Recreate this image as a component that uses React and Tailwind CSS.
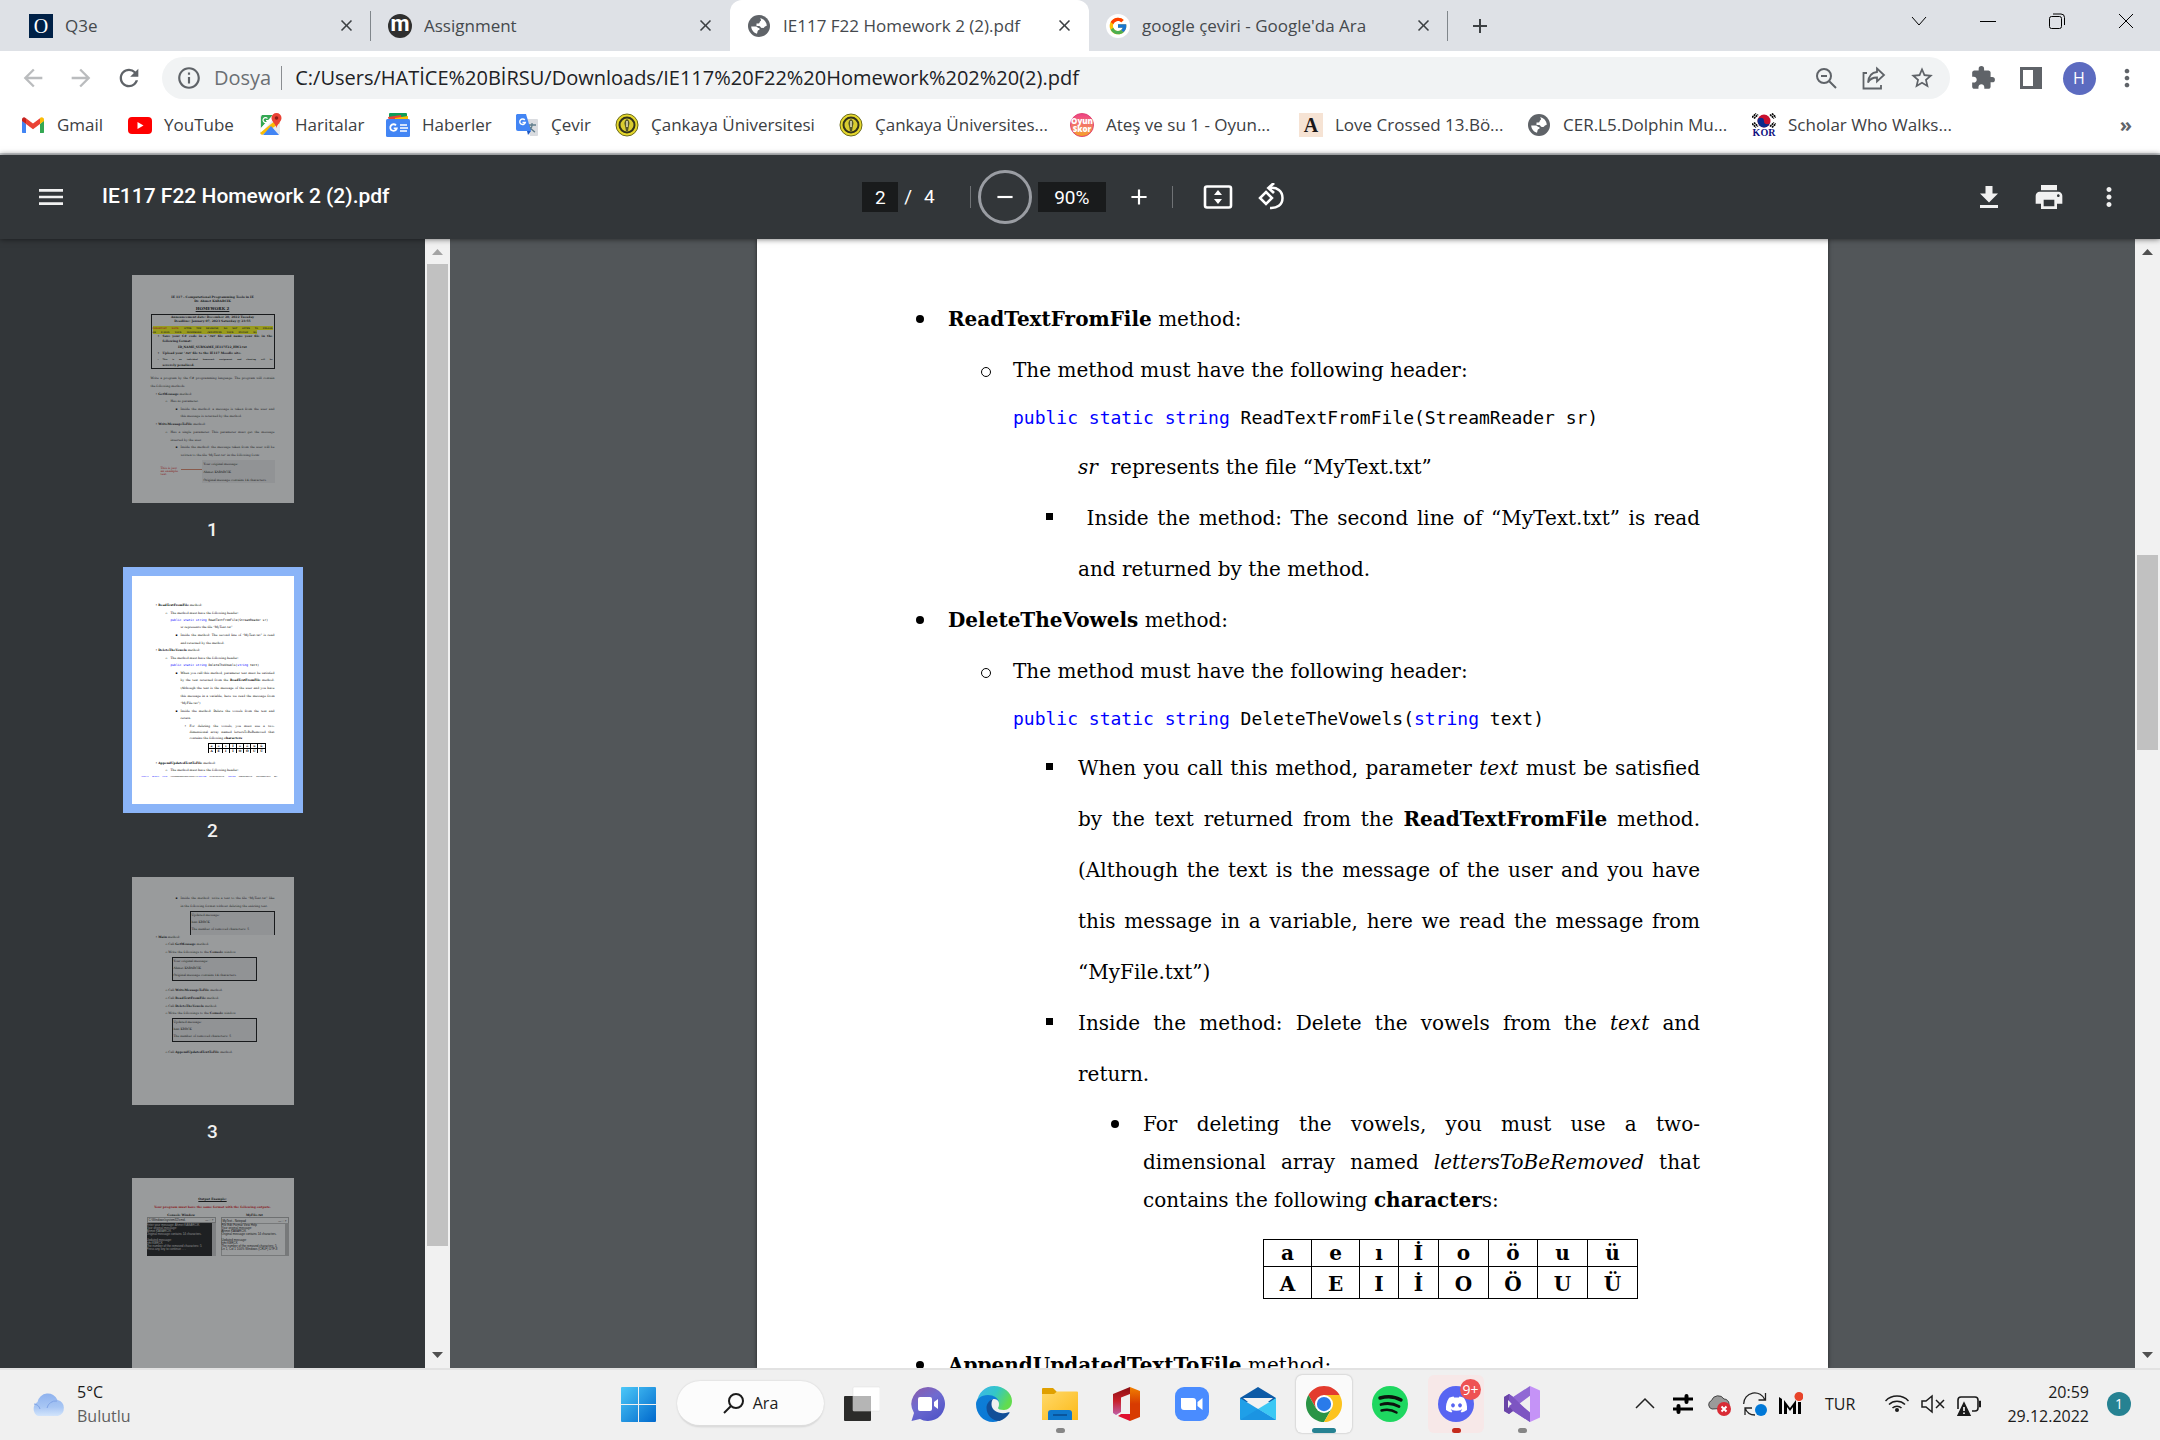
import React from "react";
import {
  MdArrowBack, MdArrowForward, MdRefresh, MdInfoOutline, MdStarBorder, MdExtension, MdMoreVert,
  MdMenu, MdRemove, MdAdd, MdPrint, MdClose,
} from "react-icons/md";
import { FcGoogle } from "react-icons/fc";
import { FaDiscord } from "react-icons/fa";

/* ---------- small drawings ---------- */

const Globe = () => (
  <svg viewBox="0 0 24 24" className="size-6" aria-hidden="true">
    <circle cx="12" cy="12" r="11" fill="#5f6368" />
    <path d="M13 4.200c3.500.4 6.500 3.500 6.800 7.300-.8 1-1.800.5-2.300 1.500s-1.500 1-2.500 1c-1.500 0-1.500-2-3-2H9.500V9.500h2c1.300 0 1-2 2-2.500 1.200-.5.200-2-.5-2.800z" fill="#fff" />
    <path d="M4.200 12.500H9c1.200 0 1.500 1.500 2.700 1.500s1.300 2 0 2-1.200 3-1.700 3.700c-3.300-.8-5.600-3.700-5.800-7.200z" fill="#fff" />
  </svg>
);
const Oxford = () => (
  <span className="flex size-6 items-center justify-center bg-[#002147] font-['Liberation_Serif',serif] text-xl leading-none text-white">O</span>
);
const Moodle = () => (
  <span className="flex size-6 items-center justify-center rounded-full bg-[#2f2f2f] pb-1 font-['Roboto',sans-serif] text-[22px] leading-none font-bold text-white">m</span>
);
const Google = () => (
  <span className="flex size-6 items-center justify-center rounded-full bg-white"><FcGoogle className="size-5" /></span>
);
const Gmail = () => (
  <svg viewBox="0 0 24 24" className="size-6" aria-hidden="true">
    <path d="M1.500 20h3.500V11L1 7.500V19.500z" fill="#4285f4" />
    <path d="M19 20h3.500l.5-.5V7.500L19 11z" fill="#34a853" />
    <path d="M19 5.500V11l4-3V6.500c0-2-2.200-3-3.800-1.800z" fill="#fbbc04" />
    <path d="M5 11V5.200L12 10.500l7-5.300V11l-7 5.300z" fill="#ea4335" />
    <path d="M1 6.500V8l4 3V5.500l-.4-.6C3 3.500 1 4.600 1 6.500z" fill="#c5221f" />
  </svg>
);
const YouTube = () => (
  <svg viewBox="0 0 24 24" className="size-6" aria-hidden="true">
    <rect y="4" width="24" height="17" rx="4" fill="#f00" />
    <path d="M9.500 9v7l6-3.500z" fill="#fff" />
  </svg>
);
const Maps = () => (
  <svg viewBox="0 0 24 24" className="size-6" aria-hidden="true">
    <rect x="1" y="2" width="20" height="20" rx="2" fill="#e8eaed" />
    <path d="M3 2h11L2 15V4z" fill="#34a853" />
    <path d="M14 2h4l-16 18-1-4z" fill="#fff" />
    <path d="M17 7l4 3-18 12-2-2z" fill="#fbbc04" />
    <path d="M12 13l8 9H4z" fill="#4285f4" />
    <path d="M17.500 0a5 5 0 0 0-5 5c0 4 4 5 5 10 1-5 5-6 5-10a5 5 0 0 0-5-5z" fill="#ea4335" />
    <circle cx="17.500" cy="5" r="1.800" fill="#8c1d18" />
    <path d="M8.500 5.500a2.500 2.500 0 1 0 .5 2H7" fill="none" stroke="#fff" strokeWidth="1.200" />
  </svg>
);
const News = () => (
  <svg viewBox="0 0 24 24" className="size-6" aria-hidden="true">
    <rect x="3" y="0" width="18" height="10" rx="1" fill="#0f9d58" />
    <path d="M2 4l13-2 1 6H3z" fill="#ea4335" />
    <path d="M9 5l13-2v7H9z" fill="#fbbc04" />
    <rect y="6" width="24" height="18" rx="1.500" fill="#4285f4" />
    <path d="M10 12.300a3.300 3.300 0 1 0 .8 3H7.700" fill="none" stroke="#fff" strokeWidth="1.800" />
    <path d="M14 12h7M14 15h8M14 18h7" stroke="#fff" strokeWidth="1.600" />
  </svg>
);
const Translate = () => (
  <svg viewBox="0 0 24 24" className="size-6" aria-hidden="true">
    <path d="M10 6h12a1 1 0 0 1 1 1v15a1 1 0 0 1-1 1h-7z" fill="#dadce0" />
    <path d="M13 12h8M17 10v2c0 3-2 5-4 6M14 13c1 3 3 4 6 6" fill="none" stroke="#607d8b" strokeWidth="1.300" />
    <path d="M2 1h9l5 17H3a2 2 0 0 1-2-2V2z" fill="#4285f4" />
    <path d="M12 18h4l-3 4z" fill="#1a56c4" />
    <path d="M9.800 7a2.800 2.800 0 1 0 .5 2.500H7.500" fill="none" stroke="#fff" strokeWidth="1.400" />
  </svg>
);
const Cankaya = () => (
  <svg viewBox="0 0 24 24" className="size-6" aria-hidden="true">
    <circle cx="12" cy="12" r="11" fill="#e6d82c" stroke="#6b6a1c" strokeWidth="1" />
    <circle cx="12" cy="12" r="7.500" fill="#d9cc30" stroke="#33331a" strokeWidth="2" />
    <path d="M12 6c2.500 1.500 3 4 2 6.500L13 18h-2l-1-5c-1.200-3-.5-5.500 2-7z" fill="#55552a" />
    <path d="M12 8v6" stroke="#e8e6c0" strokeWidth="1.500" />
  </svg>
);
const OyunSkor = () => (
  <span className="flex size-6 flex-col items-center justify-center rounded-full border border-[#e0457c] bg-[#f08a1d] bg-linear-to-b from-[#ee3f86] to-[#f5a21b] font-['Open_Sans',sans-serif] text-[8px] leading-[8px] font-extrabold text-white">
    <span>Oyun</span><span>Skor</span>
  </span>
);
const LoveA = () => (
  <span className="flex size-6 items-center justify-center bg-[#f6e3d4] font-['Liberation_Serif',serif] text-xl leading-none font-bold text-[#1c1718]">A</span>
);
const Kor = () => (
  <span className="flex size-6 flex-col items-center">
    <svg viewBox="0 0 24 15" className="h-4 w-6" aria-hidden="true">
      <circle cx="12" cy="7.500" r="6.500" fill="#c8102e" />
      <path d="M5.500 7.500a3.200 3.200 0 0 1 6.500 0 3.200 3.200 0 0 0 6.500 0 6.500 6.500 0 0 1-13 0z" fill="#0b2b8c" />
      <path d="M0 4l4-4M2 5l4-4M20 0l4 4M18 1l4 4M0 10l4 4M2 9l4 4M20 14l4-4M18 13l4-4" stroke="#000" strokeWidth="1.600" strokeDasharray="2 .5" />
    </svg>
    <span className="font-['Liberation_Serif',serif] text-[10px] leading-[8px] font-bold text-[#101080]">KOR</span>
  </span>
);

/* ---------- browser chrome ---------- */

const tabs = [
  { icon: <Oxford />, title: "Q3e", line: true },
  { icon: <Moodle />, title: "Assignment" },
  { icon: <Globe />, title: "IE117 F22 Homework 2 (2).pdf", active: true },
  { icon: <Google />, title: "google çeviri - Google'da Ara", line: true },
];

function TabStrip() {
  return (
    <div className="flex h-[51px] shrink-0 bg-[#dee1e6] pl-3 text-[17px] text-[#45494d]">
      <div role="tablist" className="flex">
        {tabs.map((t) => (
          <div
            key={t.title}
            className={
              t.active
                ? "flex w-[359px] items-center rounded-t-xl bg-white pr-[13px] pl-[17px]"
                : "flex w-[359px] items-center pr-[13px] pl-[17px]"
            }
          >
            {t.icon}
            <button role="tab" aria-selected={!!t.active} className="ml-3 flex-1 truncate text-left">{t.title}</button>
            <button aria-label={"Close " + t.title} className="flex size-6 items-center justify-center text-[#3c4043]"><MdClose className="size-[19px]" /></button>
            {t.line && <span className="-mr-[13px] ml-3 h-[30px] w-px bg-[#80868b]" />}
          </div>
        ))}
      </div>
      <button aria-label="New tab" className="ml-5 flex w-6 items-center justify-center text-[#3c4043]"><MdAdd className="size-[26px]" /></button>
      <div className="ml-auto flex h-[42px] text-black">
        <button aria-label="Search tabs" className="flex w-[69px] items-center justify-center">
          <svg viewBox="0 0 16 16" className="size-4"><path d="M1 4l7 8 7-8" fill="none" stroke="currentColor" /></svg>
        </button>
        <button aria-label="Minimize" className="flex w-[69px] items-center justify-center">
          <svg viewBox="0 0 16 16" className="size-4"><path d="M0 8.500h16" stroke="currentColor" /></svg>
        </button>
        <button aria-label="Restore" className="flex w-[69px] items-center justify-center">
          <svg viewBox="0 0 16 16" className="size-4" fill="none" stroke="currentColor"><rect x=".5" y="3.500" width="12" height="12" rx="2" /><path d="M4 1h8a3.500 3.500 0 0 1 3.500 3.500V12" /></svg>
        </button>
        <button aria-label="Close window" className="flex w-[69px] items-center justify-center">
          <svg viewBox="0 0 16 16" className="size-4"><path d="M1 1l14 14M15 1L1 15" stroke="currentColor" /></svg>
        </button>
      </div>
    </div>
  );
}

function AddressBar() {
  return (
    <div className="flex h-[54px] shrink-0 items-center bg-white pr-[9px] pl-[9px] text-[#5f6368]">
      <button aria-label="Back" className="flex w-12 justify-center text-[#babcbe]"><MdArrowBack className="size-7" /></button>
      <button aria-label="Forward" className="flex w-12 justify-center text-[#babcbe]"><MdArrowForward className="size-7" /></button>
      <button aria-label="Reload" className="flex w-12 justify-center"><MdRefresh className="size-7" /></button>
      <div className="ml-[9px] flex h-[42px] flex-1 items-center rounded-full bg-[#f1f3f4] pr-1 pl-[14px] text-xl">
        <MdInfoOutline className="size-[26px]" />
        <span className="ml-3 text-[#6b6f73]">Dosya</span>
        <span className="ml-[10px] h-6 w-px bg-[#8a8d91]" />
        <input aria-label="Address" defaultValue="C:/Users/HATİCE%20BİRSU/Downloads/IE117%20F22%20Homework%202%20(2).pdf" className="ml-[13px] min-w-0 flex-1 bg-transparent text-[#202124] outline-none" />
        <button aria-label="Zoom" className="flex w-12 justify-center">
          <svg viewBox="0 0 24 24" className="size-6" fill="none" stroke="currentColor" strokeWidth="2"><circle cx="10" cy="10" r="7" /><path d="M15 15l7 7M7 10h6" /></svg>
        </button>
        <button aria-label="Share" className="flex w-12 justify-center">
          <svg viewBox="0 0 24 24" className="size-6" fill="none" stroke="currentColor" strokeWidth="1.800"><path d="M5 7H1.500v15.500H19V19" /><path d="M15 2.500l7 6.500-7 6.500v-4c-4 0-7 1-9 5 .5-5 3-10 9-10.500z" /></svg>
        </button>
        <button aria-label="Bookmark" className="flex w-12 justify-center"><MdStarBorder className="size-[26px]" /></button>
      </div>
      <div className="flex pl-[9px]">
        <button aria-label="Extensions" className="flex w-12 items-center justify-center"><MdExtension className="size-[26px]" /></button>
        <button aria-label="Side panel" className="flex w-12 items-center justify-center">
          <svg viewBox="0 0 22 22" className="size-[22px]"><path fillRule="evenodd" d="M0 0h22v22H0zM3 3v16h10V3z" fill="currentColor" /></svg>
        </button>
        <button aria-label="Profile" className="flex w-12 items-center justify-center">
          <span className="flex size-[33px] items-center justify-center rounded-full bg-[#5c6bc0] text-base text-white">H</span>
        </button>
        <button aria-label="Menu" className="flex w-12 items-center justify-center"><MdMoreVert className="size-7" /></button>
      </div>
    </div>
  );
}

const bookmarks = [
  { icon: <Gmail />, t: "Gmail", w: "w-[107px]" },
  { icon: <YouTube />, t: "YouTube", w: "w-[131px]" },
  { icon: <Maps />, t: "Haritalar", w: "w-[127px]" },
  { icon: <News />, t: "Haberler", w: "w-[129px]" },
  { icon: <Translate />, t: "Çevir", w: "w-[100px]" },
  { icon: <Cankaya />, t: "Çankaya Üniversitesi", w: "w-[224px]" },
  { icon: <Cankaya />, t: "Çankaya Üniversites...", w: "w-[231px]" },
  { icon: <OyunSkor />, t: "Ateş ve su 1 - Oyun...", w: "w-[229px]" },
  { icon: <LoveA />, t: "Love Crossed 13.Bö...", w: "w-[228px]" },
  { icon: <Globe />, t: "CER.L5.Dolphin Mu...", w: "w-[225px]" },
  { icon: <Kor />, t: "Scholar Who Walks...", w: "w-[225px]" },
];

function Bookmarks() {
  return (
    <nav aria-label="Bookmarks" className="flex h-[50px] shrink-0 items-center border-b-2 border-[#d5d8db] bg-white pb-2 pl-[21px] text-[17px] text-[#3c4043]">
      {bookmarks.map((b) => (
        <a key={b.t} href="#" className={"flex shrink-0 items-center gap-3 whitespace-nowrap " + b.w}>{b.icon}<span>{b.t}</span></a>
      ))}
      <button aria-label="More bookmarks" className="mr-7 ml-auto text-xl leading-none font-bold text-[#5f6368]">»</button>
    </nav>
  );
}

/* ---------- PDF viewer ---------- */

function PdfToolbar() {
  return (
    <header className="z-10 flex h-[84px] shrink-0 items-center bg-[#323639] font-['Roboto',sans-serif] text-[#f1f1f1] shadow-[0_0_6px_rgba(0,0,0,0.6)]">
      <div className="flex flex-1 items-center pl-[35px]">
        <button aria-label="Menu"><MdMenu className="size-8" /></button>
        <h1 className="ml-[35px] text-[21px] font-medium text-white">IE117 F22 Homework 2 (2).pdf</h1>
      </div>
      <div className="flex items-center pr-[27px] text-[19px] text-white">
        <input aria-label="Page number" defaultValue="2" className="h-[30px] w-9 bg-[#191b1c] text-center outline-none" />
        <span className="ml-[6px]">/</span>
        <span className="ml-3">4</span>
        <span className="ml-[35px] h-[22px] w-px bg-[#6f7275]" />
        <button aria-label="Zoom out" className="ml-[7px] flex size-[54px] items-center justify-center rounded-full border-[3px] border-[#9a9da3]"><MdRemove className="size-[26px]" /></button>
        <input aria-label="Zoom level" defaultValue="90%" className="ml-[6px] h-[30px] w-[68px] bg-[#191b1c] text-center outline-none" />
        <button aria-label="Zoom in" className="ml-5"><MdAdd className="size-[26px]" /></button>
        <span className="ml-5 h-[22px] w-px bg-[#6f7275]" />
        <button aria-label="Fit to page" className="ml-[30px]">
          <svg viewBox="0 0 30 24" className="h-6 w-[30px]"><rect x="2" y="1.500" width="26" height="21" rx="2" fill="none" stroke="currentColor" strokeWidth="2.600" /><path d="M15 5l4 5h-8zM15 19l4-5h-8z" fill="currentColor" /></svg>
        </button>
        <button aria-label="Rotate" className="ml-6">
          <svg viewBox="0 0 28 28" className="size-7" fill="none" stroke="currentColor" strokeWidth="2.500"><path d="M9 9l6 6-6 6-6-6z" /><path d="M13 5c7-1 12.500 3 12.500 10S20 25.500 13 25" /><path d="M17 0l-5.500 5 5.500 5" strokeWidth="2.800" /></svg>
        </button>
      </div>
      <div className="flex flex-1 items-center justify-end pr-[21px]">
        <button aria-label="Download" className="flex w-[60px] justify-center">
          <svg viewBox="0 0 18 22" className="h-[22px] w-[18px]" fill="currentColor"><path d="M5.500 0h7v7.500H18l-9 9-9-9h5.500zM0 19h18v3H0z" /></svg>
        </button>
        <button aria-label="Print" className="flex w-[60px] justify-center"><MdPrint className="size-8" /></button>
        <button aria-label="More actions" className="flex w-[60px] justify-center"><MdMoreVert className="size-[30px]" /></button>
      </div>
    </header>
  );
}

function ScrollBar({ top, size, dim }) {
  return (
    <div className="flex w-[25px] shrink-0 flex-col items-center bg-[#f1f1f1]" aria-hidden="true">
      <svg viewBox="0 0 25 25" className="size-[25px] shrink-0"><path d="M7 16h11l-5.500-6z" fill={dim ? "#a3a3a3" : "#505050"} /></svg>
      <div className="min-h-0 w-[21px] flex-1">
        <div style={{ height: top }} />
        <div style={{ height: size }} className="bg-[#c1c1c1]" />
      </div>
      <svg viewBox="0 0 25 25" className="size-[25px] shrink-0"><path d="M7 9h11l-5.500 6z" fill="#505050" /></svg>
    </div>
  );
}

/* Preview sheets: each entry is { y, h, x, w } with text or nested entries, stacked in flow. */
const t = (y, x, w, text, cls = "") => ({ y: y - 2, h: 4, x, w, text, cls });

function Sheet({ items }) {
  let bottom = 0;
  return items.map((it, i) => {
    const mt = it.y - bottom;
    bottom = it.y + it.h;
    const style = { marginTop: mt, marginLeft: it.x, width: it.w, height: it.h };
    if (typeof it.text === "string" && /^[•o▪] {2}/.test(it.text)) {
      return (
        <div key={i} style={style} className={"flex leading-[4px] whitespace-nowrap " + it.cls}>
          <span className="w-[5px] shrink-0 [text-align-last:left]">{it.text[0] === "▪" ? "▪" : it.text[0]}</span>
          <p className="flex-1">{it.text.slice(3)}</p>
        </div>
      );
    }
    if (it.text) {
      return <p key={i} style={style} className={"whitespace-nowrap leading-[4px] " + it.cls}>{it.text}</p>;
    }
    return (
      <div key={i} style={style} className={it.cls}>{it.node || <Sheet items={it.items} />}</div>
    );
  });
}

const J = "[text-align-last:justify]";
const blue = (s) => <span className="text-[#0000ff]">{s}</span>;

const sheet1 = [
  t(22, 19, 124, "IE 117 - Computational Programming Tools in IE", "text-center font-bold"),
  t(26, 19, 124, "Dr. Ahmet KABARCIK", "text-center font-bold"),
  t(34, 19, 124, "HOMEWORK 2", "text-center text-[4px] font-bold underline"),
  {
    y: 39, h: 55, x: 19, w: 124, cls: "border border-black",
    items: [
      t(2, 0, 122, "Announcement date: December 20, 2022 Tuesday", "text-center font-bold"),
      t(6, 0, 122, "Deadline: January 07, 2023 Saturday @ 23:55", "text-center font-bold"),
      t(13, 1, 120, <><b className="text-[#e00000]">IMPORTANT NOTE:</b> AFTER THE DEADLINE, DO NOT OFFER TO UPLOAD</>, "bg-[#ffff00] text-[2px] font-bold " + J),
      t(17, 1, 104, "OR E-MAIL YOUR HOMEWORK, (WHATEVER YOUR EXCUSE IS)", "bg-[#ffff00] text-[2px] font-bold " + J),
      t(21, 6, 115, "•  Save your C# code in a '.txt' file and name your file in the", "font-bold " + J),
      t(26, 11, 100, "following format:", "font-bold"),
      t(32, 0, 122, "ID_NAME_SURNAME_IE117F22_HW2.txt", "text-center font-bold"),
      t(38, 6, 115, "•  Upload your '.txt' file to the IE117 Moodle site.", "font-bold"),
      t(44, 6, 115, "•  This is an individual homework assignment and cheating will be", "text-[2px] font-bold " + J),
      t(50, 11, 100, "severely penalized.", "font-bold"),
    ],
  },
  t(103, 19, 124, "Write a program by the C# programming language. The program will contain", J),
  t(111, 19, 124, "the following methods."),
  t(119, 24, 119, <>•  <b>GetMessage</b> method:</>),
  t(126, 34, 109, "o  Has no parameter."),
  t(134, 44, 99, "▪  Inside the method: a message is taken from the user and", J),
  t(141, 49, 94, "this message is returned by the method."),
  t(149, 24, 119, <>•  <b>WriteMessageToFile</b> method:</>),
  t(157, 34, 109, "o  Has a single parameter. This parameter must get the message", J),
  t(165, 39, 104, "inserted by the user."),
  t(172, 44, 99, "▪  Inside the method: the message taken from the user will be", J),
  t(180, 49, 94, "written to the file 'MyText.txt' in the following form:"),
  {
    y: 185, h: 23, x: 29, w: 114, cls: "flex",
    node: (
      <>
        <p className="w-5 shrink-0 pt-[7px] leading-[3px] text-[#e00000]">This is just an example text</p>
        <span className="mt-[9px] h-px flex-1 bg-[#e08060]" />
        <div className="w-[73px] bg-[#f0f0f0] pl-[2px] leading-[8px] whitespace-nowrap">
          <p>Your original message:</p><p>Ahmet KABARCIK</p><p>Original message contains 14 characters.</p>
        </div>
      </>
    ),
  },
];

const mono = "font-['DejaVu_Sans_Mono',monospace]";
const sheet2 = [
  t(29, 24, 119, <>•  <b>ReadTextFromFile</b> method:</>),
  t(37, 34, 109, "o  The method must have the following header:"),
  t(44, 39, 90, <>{blue("public static string")} ReadTextFromFile(StreamReader sr)</>, mono),
  t(51, 49, 94, "sr represents the file “MyText.txt”"),
  t(59, 44, 99, "▪  Inside the method: The second line of “MyText.txt” is read", J),
  t(67, 49, 94, "and returned by the method."),
  t(74, 24, 119, <>•  <b>DeleteTheVowels</b> method:</>),
  t(82, 34, 109, "o  The method must have the following header:"),
  t(89, 39, 104, <>{blue("public static string")} DeleteTheVowels({blue("string")} text)</>, mono),
  t(97, 44, 99, "▪  When you call this method, parameter text must be satisfied", J),
  t(104, 49, 94, <>by the text returned from the <b>ReadTextFromFile</b> method.</>, J),
  t(112, 49, 94, "(Although the text is the message of the user and you have", J),
  t(120, 49, 94, "this message in a variable, here we read the message from", J),
  t(127, 49, 94, "“MyFile.txt”)"),
  t(135, 44, 99, "▪  Inside the method: Delete the vowels from the text and", J),
  t(142, 49, 94, "return."),
  t(150, 53, 90, "•  For deleting the vowels, you must use a two-", J),
  t(156, 58, 85, "dimensional array named lettersToBeRemoved that", J),
  t(162, 58, 85, <>contains the following <b>characters</b>:</>),
  {
    y: 167, h: 10, x: 76, w: 58,
    cls: "grid grid-cols-8 gap-px border border-black bg-black text-center text-[3px] leading-[4px] font-bold",
    node: "aeıİoöuüAEIİOÖUÜ".split("").map((c, i) => <span key={i} className="bg-white">{c}</span>),
  },
  t(187, 24, 119, <>•  <b>AppendUpdatedTextToFile</b> method:</>),
  t(194, 34, 109, "o  The method must have the following header:"),
  t(201, 10, 136, <>{blue("public static void")} AppendUpdatedTextToFile({blue("string")} originalText, {blue("string")} updatedText, StreamWriter sw)</>, "font-['Liberation_Mono',monospace] text-[2px] " + J),
];

const box = (y, x, a, b, c, cls = "border border-black bg-[#f0f0f0]") => ({
  y, h: 24, x, w: 85, cls,
  node: <div className="pl-px leading-[7px] whitespace-nowrap"><p>{a}</p><p>{b}</p><p>{c}</p></div>,
});
const sheet3 = [
  t(21, 44, 99, "▪  Inside the method: write a text to the file “MyText.txt” like", J),
  t(29, 49, 94, "in the following format without deleting the existing text."),
  box(34, 58, "Updated message:", "hmt KBRCK", "The number of removed characters: 5", "border border-b-0 border-black bg-[#f0f0f0]"),
  t(60, 24, 119, <>•  <b>Main</b> method:</>),
  t(67, 34, 109, <>o  Call <b>GetMessage</b> method.</>),
  t(75, 34, 109, <>o  Write the followings to the <b>Console</b> window</>),
  box(80, 40, "Your original message:", "Ahmet KABARCIK", "Original message contains 14 characters."),
  t(113, 34, 109, <>o  Call <b>WriteMessageToFile</b> method.</>),
  t(121, 34, 109, <>o  Call <b>ReadTextFromFile</b> method.</>),
  t(129, 34, 109, <>o  Call <b>DeleteTheVowels</b> method.</>),
  t(136, 34, 109, <>o  Write the followings to the <b>Console</b> window</>),
  box(141, 40, "Updated message:", "hmt KBRCK", "The number of removed characters: 5"),
  t(175, 34, 109, <>o  Call <b>AppendUpdatedTextToFile</b> method.</>),
];

const sheet4 = [
  t(21, 0, 162, "Output Example:", "text-center font-bold underline"),
  t(29, 0, 162, "Your program must have the same format with the following outputs.", "text-center font-bold text-[#e00000]"),
  {
    y: 35, h: 43, x: 15, w: 142, cls: "flex gap-[5px] whitespace-nowrap",
    node: (
      <>
        <div className="flex w-[69px] flex-col">
          <p className="text-center leading-[4px] font-bold">Console Window</p>
          <div className="flex h-[6px] items-center justify-between border border-[#aaaaaa] bg-white px-px font-['Liberation_Sans',sans-serif] leading-[4px]"><span>C:\Windows\system32\cmd.</span><span>— □ ×</span></div>
          <div className="flex-1 border-r-4 border-[#cccccc] bg-[#0c0c0c] pt-px font-['Liberation_Sans',sans-serif] leading-[3px] text-[#dddddd]">
            <p>Enter your message: Ahmet KABARCIK</p><p>Your original message:</p><p>Ahmet KABARCIK</p><p>Original message contains 14 characters.</p>
            <p className="pt-[3px]">Updated message:</p><p>hmt KBRCK</p><p>The number of the removed characters: 5</p><p>Press any key to continue . . .</p>
          </div>
        </div>
        <div className="flex w-[68px] flex-col">
          <p className="text-center leading-[4px] font-bold">MyFile.txt</p>
          <div className="flex h-[6px] items-center justify-between border border-b-0 border-[#aaaaaa] bg-white px-px font-['Liberation_Sans',sans-serif] leading-[4px]"><span>MyText - Notepad</span><span>— □ ×</span></div>
          <div className="flex-1 border border-r-4 border-[#bbbbbb] bg-white font-['Liberation_Sans',sans-serif] leading-[3px]">
            <p>File Edit Format View Help</p><p>Your original message:</p><p>Ahmet KABARCIK</p><p>Original message contains 14 characters.</p>
            <p className="pt-[3px]">Updated message:</p><p>hmt KBRCK</p><p>The number of the removed characters: 5</p><p>Ln 1, Col 1 100% Windows (CRLF) UTF-8</p>
          </div>
        </div>
      </>
    ),
  },
];

function Thumb({ n, items, active }) {
  return (
    <li className="flex h-[301px] shrink-0 flex-col items-center">
      <button
        aria-label={"Page " + n}
        className={
          active
            ? "-mt-[9px] block border-[9px] border-[#8ab4f8] text-left"
            : "block text-left opacity-50"
        }
      >
        <div className="flow-root h-[228px] w-[162px] overflow-hidden bg-white font-['DejaVu_Serif',serif] text-[3px] text-black"><Sheet items={items} /></div>
      </button>
      <span className={active ? "mt-[5px] font-medium" : "mt-[14px] font-medium"}>{n}</span>
    </li>
  );
}

function Sidebar() {
  return (
    <aside className="flex w-[450px] shrink-0 overflow-hidden bg-[#323639]">
      <ul className="flex flex-1 flex-col overflow-hidden pt-9 font-['Roboto',sans-serif] text-[19px] leading-[26px] text-[#f1f1f1]">
        <Thumb n="1" items={sheet1} />
        <Thumb n="2" items={sheet2} active />
        <Thumb n="3" items={sheet3} />
        <Thumb n="4" items={sheet4} />
      </ul>
      <ScrollBar top="0%" size="91%" dim />
    </aside>
  );
}

const marks = {
  dot: <span className="size-2 rounded-full bg-black" />,
  ring: <span className="mt-1 size-[10px] rounded-full border border-black" />,
  square: <span className="mb-[2px] size-[7px] bg-black" />,
};

/* One printed line of the document; the mark hangs in the left margin. */
function Line({ level, mark, wide, code, tight, children }) {
  const indent = ["pl-[191px]", "pl-[256px]", "pl-[321px]", "pl-[386px]"][level];
  const height = code ? "h-[46px]" : tight ? "h-[38px]" : "h-[51px]";
  return (
    <div className={"flex shrink-0 items-center pr-32 " + indent + " " + height}>
      <span className="-ml-11 flex w-11 shrink-0 items-center pl-3">{mark && marks[mark]}</span>
      <p className={
        (code ? "font-['DejaVu_Sans_Mono',monospace] text-lg " : "") +
        (wide ? "min-w-0 flex-1 whitespace-nowrap [text-align-last:justify]" : "whitespace-pre")
      }>{children}</p>
    </div>
  );
}

function Page() {
  return (
    <article className="mx-auto flex w-[1071px] shrink-0 flex-col overflow-hidden bg-white pt-[54px] font-['DejaVu_Serif',serif] text-xl text-black shadow-[0_0_4px_rgba(0,0,0,0.6)]">
      <Line level={0} mark="dot"><b>ReadTextFromFile</b> method:</Line>
      <Line level={1} mark="ring">The method must have the following header:</Line>
      <Line level={1} code>{blue("public static string")} ReadTextFromFile(StreamReader sr)</Line>
      <Line level={2}><i>sr</i>  represents the file “MyText.txt”</Line>
      <Line level={2} mark="square" wide>&nbsp;Inside the method: The second line of “MyText.txt” is read</Line>
      <Line level={2}>and returned by the method.</Line>
      <Line level={0} mark="dot"><b>DeleteTheVowels</b> method:</Line>
      <Line level={1} mark="ring">The method must have the following header:</Line>
      <Line level={1} code>{blue("public static string")} DeleteTheVowels({blue("string")} text)</Line>
      <Line level={2} mark="square" wide>When you call this method, parameter <i>text</i> must be satisfied</Line>
      <Line level={2} wide>by the text returned from the <b>ReadTextFromFile</b> method.</Line>
      <Line level={2} wide>(Although the text is the message of the user and you have</Line>
      <Line level={2} wide>this message in a variable, here we read the message from</Line>
      <Line level={2}>“MyFile.txt”)</Line>
      <Line level={2} mark="square" wide>Inside the method: Delete the vowels from the <i>text</i> and</Line>
      <Line level={2}>return.</Line>
      <div className="flex flex-col pt-[6px]">
        <Line level={3} mark="dot" tight wide>For deleting the vowels, you must use a two-</Line>
        <Line level={3} tight wide>dimensional array named <i>lettersToBeRemoved</i> that</Line>
        <Line level={3} tight>contains the following <b>character</b>s:</Line>
      </div>
      <table className="mt-5 ml-[506px] w-[374px] table-fixed border-collapse text-center font-bold">
        <colgroup>
          <col className="w-12" /><col className="w-12" /><col className="w-[39px]" /><col className="w-10" />
          <col className="w-[50px]" /><col className="w-[49px]" /><col className="w-[50px]" /><col className="w-[50px]" />
        </colgroup>
        <tbody>
          <tr className="h-[27px]">{"aeıİoöuü".split("").map((c) => <td key={c} className="border border-black p-0 leading-[26px]">{c}</td>)}</tr>
          <tr className="h-8">{"AEIİOÖUÜ".split("").map((c) => <td key={c} className="border border-black p-0 pt-1 leading-[27px]">{c}</td>)}</tr>
        </tbody>
      </table>
      <div className="pt-10">
        <Line level={0} mark="dot"><b>AppendUpdatedTextToFile</b> method:</Line>
      </div>
    </article>
  );
}

/* ---------- taskbar ---------- */

const svg36 = "size-9";
const WindowsLogo = () => (
  <svg viewBox="0 0 36 36" className={svg36}>
    <defs><linearGradient id="win" x1="0" y1="0" x2="1" y2="1"><stop stopColor="#4cc8f8" /><stop offset="1" stopColor="#0068cc" /></linearGradient></defs>
    <path d="M0 2a1 1 0 0 1 1-1h16v17H0zM18 1h16a1 1 0 0 1 1 1v16H18zM0 19h17v17H1a1 1 0 0 1-1-1zM18 19h17v16a1 1 0 0 1-1 1H18z" fill="url(#win)" />
  </svg>
);
const TaskView = () => (
  <svg viewBox="0 0 36 36" className={svg36}>
    <rect x="0" y="10" width="27" height="25" rx="1" fill="#2b2b2a" />
    <rect x="9" y="1" width="27" height="24" rx="1" fill="#ffffff" stroke="#dddddd" strokeWidth=".5" />
    <rect x="9" y="10" width="18" height="15" fill="#b5b5b5" />
  </svg>
);
const Chat = () => (
  <svg viewBox="0 0 36 36" className={svg36}>
    <defs><linearGradient id="chat" x1="0" y1="0" x2=".6" y2="1"><stop stopColor="#8d5aa8" /><stop offset=".5" stopColor="#6f6bd0" /><stop offset="1" stopColor="#5457c8" /></linearGradient></defs>
    <path d="M18 1a17 17 0 1 1-8 32l-8.500 2L4 27A17 17 0 0 1 18 1z" fill="url(#chat)" />
    <rect x="8" y="11" width="14" height="14" rx="2" fill="#fff" /><path d="M24 16l4-3v10l-4-3z" fill="#fff" />
  </svg>
);
const Edge = () => (
  <svg viewBox="0 0 36 36" className={svg36}>
    <defs>
      <linearGradient id="edg1" x1="0" y1="0" x2="1" y2=".4"><stop stopColor="#3fb4ee" /><stop offset=".55" stopColor="#33c6c8" /><stop offset="1" stopColor="#62dc4e" /></linearGradient>
      <linearGradient id="edg2" x1="0" y1="0" x2=".6" y2="1"><stop stopColor="#0f7fd6" /><stop offset="1" stopColor="#0a78d6" /></linearGradient>
    </defs>
    <path d="M1 16C2 7 9 0 18 0c10 0 18 7 18 15 0 6-4 9-8 9-4 0-6-1-6-2 0-.6 1-1 1-4 0-4-4-8-9-8-6 0-11 2-13 6z" fill="url(#edg1)" />
    <path d="M0 18c0-5 5-9 12-9 6 0 10 3 11 7-1-2-3-3-5-3-4 0-6 4-6 8 0 8 6 13 12 13-2 1-4 2-7 2C7 36 0 28 0 18z" fill="url(#edg2)" />
    <path d="M17 13c-4 1-6.500 5-6.500 9 0 7 6 13 13 13 4-1.500 7.500-4 10-8 .4-.7-.2-1-1-.7-8 3-17-1-17-8 0-2.500.7-4.300 1.500-5.300z" fill="#124f98" />
  </svg>
);
const Folder = () => (
  <svg viewBox="0 0 36 36" className={svg36}>
    <defs><linearGradient id="fol" x1="0" y1="0" x2="1" y2="1"><stop stopColor="#ffd96a" /><stop offset="1" stopColor="#fcb917" /></linearGradient></defs>
    <path d="M0 3a1 1 0 0 1 1-1h10l4 4h20v4H0z" fill="#e0a000" />
    <path d="M0 8h12l3-2.500h20a1 1 0 0 1 1 1V34H0z" fill="url(#fol)" />
    <path d="M6 34V27a3 3 0 0 1 3-3h18a3 3 0 0 1 3 3v7z" fill="#0f78cc" /><path d="M11 29h14" stroke="#0a4a8c" strokeWidth="1.500" />
  </svg>
);
const Office = () => (
  <svg viewBox="0 0 36 36" className={svg36}>
    <defs><linearGradient id="off" x1="0" y1="0" x2="0" y2="1"><stop stopColor="#f08000" /><stop offset=".5" stopColor="#d83b01" /></linearGradient>
      <linearGradient id="off2" x1="0" y1="0" x2="0" y2="1"><stop stopColor="#8a0f12" /><stop offset=".5" stopColor="#c8202a" /><stop offset="1" stopColor="#c060a8" /></linearGradient></defs>
    <path d="M22 1l10 4v26l-10 4z" fill="url(#off)" />
    <path d="M22 1v7l-9 3.500V26l-5 3-3-2V8z" fill="url(#off2)" />
    <path d="M10 30l3-2h9v7z" fill="#e01030" />
  </svg>
);
const Zoom = () => (
  <svg viewBox="0 0 36 36" className={svg36}>
    <rect x="1" y="1" width="34" height="34" rx="9" fill="#4a8cff" />
    <path d="M7 12h12a3 3 0 0 1 3 3v9H10a3 3 0 0 1-3-3zM23.500 16l5-4v12l-5-4z" fill="#fff" />
  </svg>
);
const Mail = () => (
  <svg viewBox="0 0 36 36" className={svg36}>
    <path d="M0 12L18 1l18 11v4H0z" fill="#0c5aa6" />
    <path d="M3 12h30L18 24z" fill="#f2f2f2" />
    <path d="M0 12l36 22H1a1 1 0 0 1-1-1z" fill="#1f9fe8" /><path d="M36 12v22L18 23z" fill="#3cc8f4" />
    <path d="M0 34l18-11 18 11z" fill="#1b94e2" />
  </svg>
);
const Chrome = () => (
  <svg viewBox="0 0 48 48" className={svg36}>
    <path d="M3.220 12A24 24 0 0 1 44.780 12H24L13.600 30z" fill="#e33b2e" />
    <path d="M3.220 12L13.600 30H34.400L24 48A24 24 0 0 1 3.220 12z" fill="#2a9446" />
    <path d="M44.780 12A24 24 0 0 1 24 48L34.400 30 24 12z" fill="#fcc31e" />
    <circle cx="24" cy="24" r="12" fill="#fff" /><circle cx="24" cy="24" r="9.500" fill="#2a7bea" />
  </svg>
);
const Spotify = () => (
  <svg viewBox="0 0 36 36" className={svg36} fill="none" strokeLinecap="round" stroke="#0c130e">
    <circle cx="18" cy="18" r="18" fill="#1ed760" stroke="none" />
    <path d="M8 12c7-2 15-1.500 21 2" strokeWidth="3.400" /><path d="M9 18.500c6-1.700 12.500-1 18 2" strokeWidth="2.800" /><path d="M9.500 24.500c5-1.300 10.500-.8 15 2" strokeWidth="2.400" />
  </svg>
);
const Discord = () => (
  <span className="flex size-9 items-center justify-center rounded-full bg-[#5865f2]"><FaDiscord className="size-[23px] text-white" /></span>
);
const VisualStudio = () => (
  <svg viewBox="0 0 36 36" className={svg36}>
    <path fillRule="evenodd" d="M0 11l5-3 4 3 17-11 1 9-12 9 12 9-1 9L9 25l-4 3-5-3zM4 14v8l4-4z" fill="#9068d4" />
    <path d="M0 11l5-3 4 3v5l-5-2v8l5-2v5l-4 3-5-3z" fill="#6a45a8" />
    <path d="M5 8l4 3 17 16v9L9 25 5 20l3-2-3-4z" fill="#7d55c2" />
    <path d="M26 0l10 4.500v27L26 36z" fill="#c593f7" />
  </svg>
);

const apps = [
  { n: "Task View", i: <TaskView /> }, { n: "Chat", i: <Chat /> }, { n: "Edge", i: <Edge /> },
  { n: "File Explorer", i: <Folder />, dot: "w-[9px] bg-[#868686]" }, { n: "Office", i: <Office /> },
  { n: "Zoom", i: <Zoom /> }, { n: "Mail", i: <Mail /> },
  { n: "Chrome", i: <Chrome />, dot: "w-6 bg-[#268292]", box: "bg-[#fafafa] shadow-[0_0_2px_rgba(0,0,0,0.3)]" },
  { n: "Spotify", i: <Spotify /> },
  { n: "Discord", i: <Discord />, dot: "w-[9px] bg-[#c42b1c]", box: "bg-[#f7e8e8]", badge: "9+" },
  { n: "Visual Studio", i: <VisualStudio />, dot: "w-[9px] bg-[#868686]" },
];

function Taskbar() {
  return (
    <footer className="flex h-[72px] shrink-0 items-center border-t-2 border-[#e2e2e2] bg-[#f0f0f0] pb-[2px] font-['Open_Sans',sans-serif] text-base text-[#1b1b1b]">
      <div className="flex flex-1 items-center pl-[30px]">
        <svg viewBox="0 0 36 26" className="h-[26px] w-9">
          <defs><linearGradient id="cl" x1="0" y1="0" x2="0" y2="1"><stop stopColor="#8fb2ee" /><stop offset=".6" stopColor="#a8c6f4" /><stop offset="1" stopColor="#d2e4fb" /></linearGradient></defs>
          <path d="M8 25a8 8 0 0 1-.5-14A10.500 10.500 0 0 1 27.500 9 8.300 8.300 0 0 1 28 25z" fill="url(#cl)" /><path d="M10 18a7 7 0 0 0-6-5M27 10a9 9 0 0 0-10 7" stroke="#7fa3e6" fill="none" />
        </svg>
        <div className="ml-[11px] leading-6"><p>5°C</p><p className="text-[#5f5f5f]">Bulutlu</p></div>
      </div>
      <div className="flex items-center">
        <button aria-label="Start" className="flex w-[66px] justify-center"><WindowsLogo /></button>
        <button className="mx-[5px] flex h-[46px] w-[147px] items-center justify-center gap-2 rounded-full border-b-2 border-[#dddddd] bg-[#fcfcfc] shadow-[0_0_2px_rgba(0,0,0,0.15)]">
          <svg viewBox="0 0 22 22" className="size-[22px]" fill="none" stroke="currentColor" strokeWidth="2"><circle cx="13" cy="9" r="7" /><path d="M8 14l-7 7" /></svg>
          Ara
        </button>
        {apps.map((a) => (
          <button key={a.n} aria-label={a.n} className="relative flex w-[66px] justify-center">
            <span className={"flex h-[58px] w-14 flex-col items-center rounded-md pt-[11px] " + (a.box || "")}>
              {a.i}
              {a.dot && <span className={"mt-[6px] h-[5px] rounded-full " + a.dot} />}
            </span>
            {a.badge && <span className="absolute top-1 right-2 flex size-[21px] items-center justify-center rounded-full bg-[#ee5253] text-sm text-white">{a.badge}</span>}
          </button>
        ))}
      </div>
      <div className="flex flex-1 items-center justify-end pr-[29px]">
        <button aria-label="Hidden icons" className="mr-4">
          <svg viewBox="0 0 20 20" className="size-5"><path d="M1 14l9-9 9 9" fill="none" stroke="#222" strokeWidth="1.500" /></svg>
        </button>
        <div className="flex gap-3">
          <svg viewBox="0 0 24 24" className="size-6"><path d="M2 7h20M2 17h20" stroke="#000" strokeWidth="3" /><path d="M15.500 4v6M7.500 14v6" stroke="#000" strokeWidth="4" strokeLinecap="round" /></svg>
          <svg viewBox="0 0 24 24" className="size-6"><path d="M5 17a4.500 4.500 0 0 1-.5-8.500A7 7 0 0 1 17 7a5 5 0 0 1 5 5v4z" fill="#9a9a9a" stroke="#444" /><circle cx="17" cy="17" r="7" fill="#d92b35" /><path d="M14.500 14.500l5 5M19.500 14.500l-5 5" stroke="#fff" strokeWidth="2" /></svg>
          <svg viewBox="0 0 24 24" className="size-6" fill="none" stroke="#222" strokeWidth="1.300"><path d="M.7 12A11 11 0 0 1 22 8M22.500 1v7h-7M2 23v-7h7M2 16c1.500 4 5 7 10 7" /><circle cx="18" cy="18" r="6" fill="#0078d7" stroke="none" /></svg>
          <svg viewBox="0 0 24 24" className="size-6"><path d="M0 5l3 2v15H0zM5 22V8l6 8 6-8v14h-3v-7l-3 4-3-4v7zM19 10h3v12h-3z" fill="#000" /><circle cx="20" cy="4.500" r="4.500" fill="#e8442a" /></svg>
        </div>
        <span className="ml-[22px] w-10">TUR</span>
        <div className="ml-5 flex gap-3 text-[#1b1b1b]">
          <svg viewBox="0 0 24 24" className="size-6" fill="none" stroke="currentColor" strokeWidth="1.500"><path d="M0.500 9a16 16 0 0 1 23 0M4 12.500a11.500 11.500 0 0 1 16 0M7.500 16a6.500 6.500 0 0 1 9 0" /><circle cx="12" cy="18" r="2" fill="currentColor" stroke="none" /></svg>
          <svg viewBox="0 0 24 24" className="size-6" fill="none" stroke="currentColor" strokeWidth="1.500"><path d="M1 9h4l6-5v16l-6-5H1zM15 8l8 8M23 8l-8 8" /></svg>
          <svg viewBox="0 0 24 24" className="size-6" fill="none" stroke="currentColor" strokeWidth="1.600"><path d="M1 17V8a3 3 0 0 1 3-3h14a3 3 0 0 1 3 3v8a3 3 0 0 1-3 3h-3" /><path d="M22 9.500h1.500v5H22" fill="currentColor" /><path d="M7 11l6 12.500H1z" fill="currentColor" /><path d="M7 15v4M7 20.500v1.500" stroke="#fff" /></svg>
        </div>
        <div className="ml-[18px] w-[90px] text-right leading-6"><p>20:59</p><p>29.12.2022</p></div>
        <span className="ml-[18px] flex size-6 items-center justify-center rounded-full bg-[#268292] text-sm text-white">1</span>
      </div>
    </footer>
  );
}

export default function App() {
  return (
    <div className="flex h-screen w-full flex-col overflow-hidden bg-[#525659] font-['Open_Sans',sans-serif]">
      <TabStrip />
      <AddressBar />
      <Bookmarks />
      <PdfToolbar />
      <div className="flex min-h-0 flex-1">
        <Sidebar />
        <main className="flex min-w-0 flex-1 overflow-hidden"><Page /></main>
        <ScrollBar top="27%" size="18%" />
      </div>
      <Taskbar />
    </div>
  );
}
